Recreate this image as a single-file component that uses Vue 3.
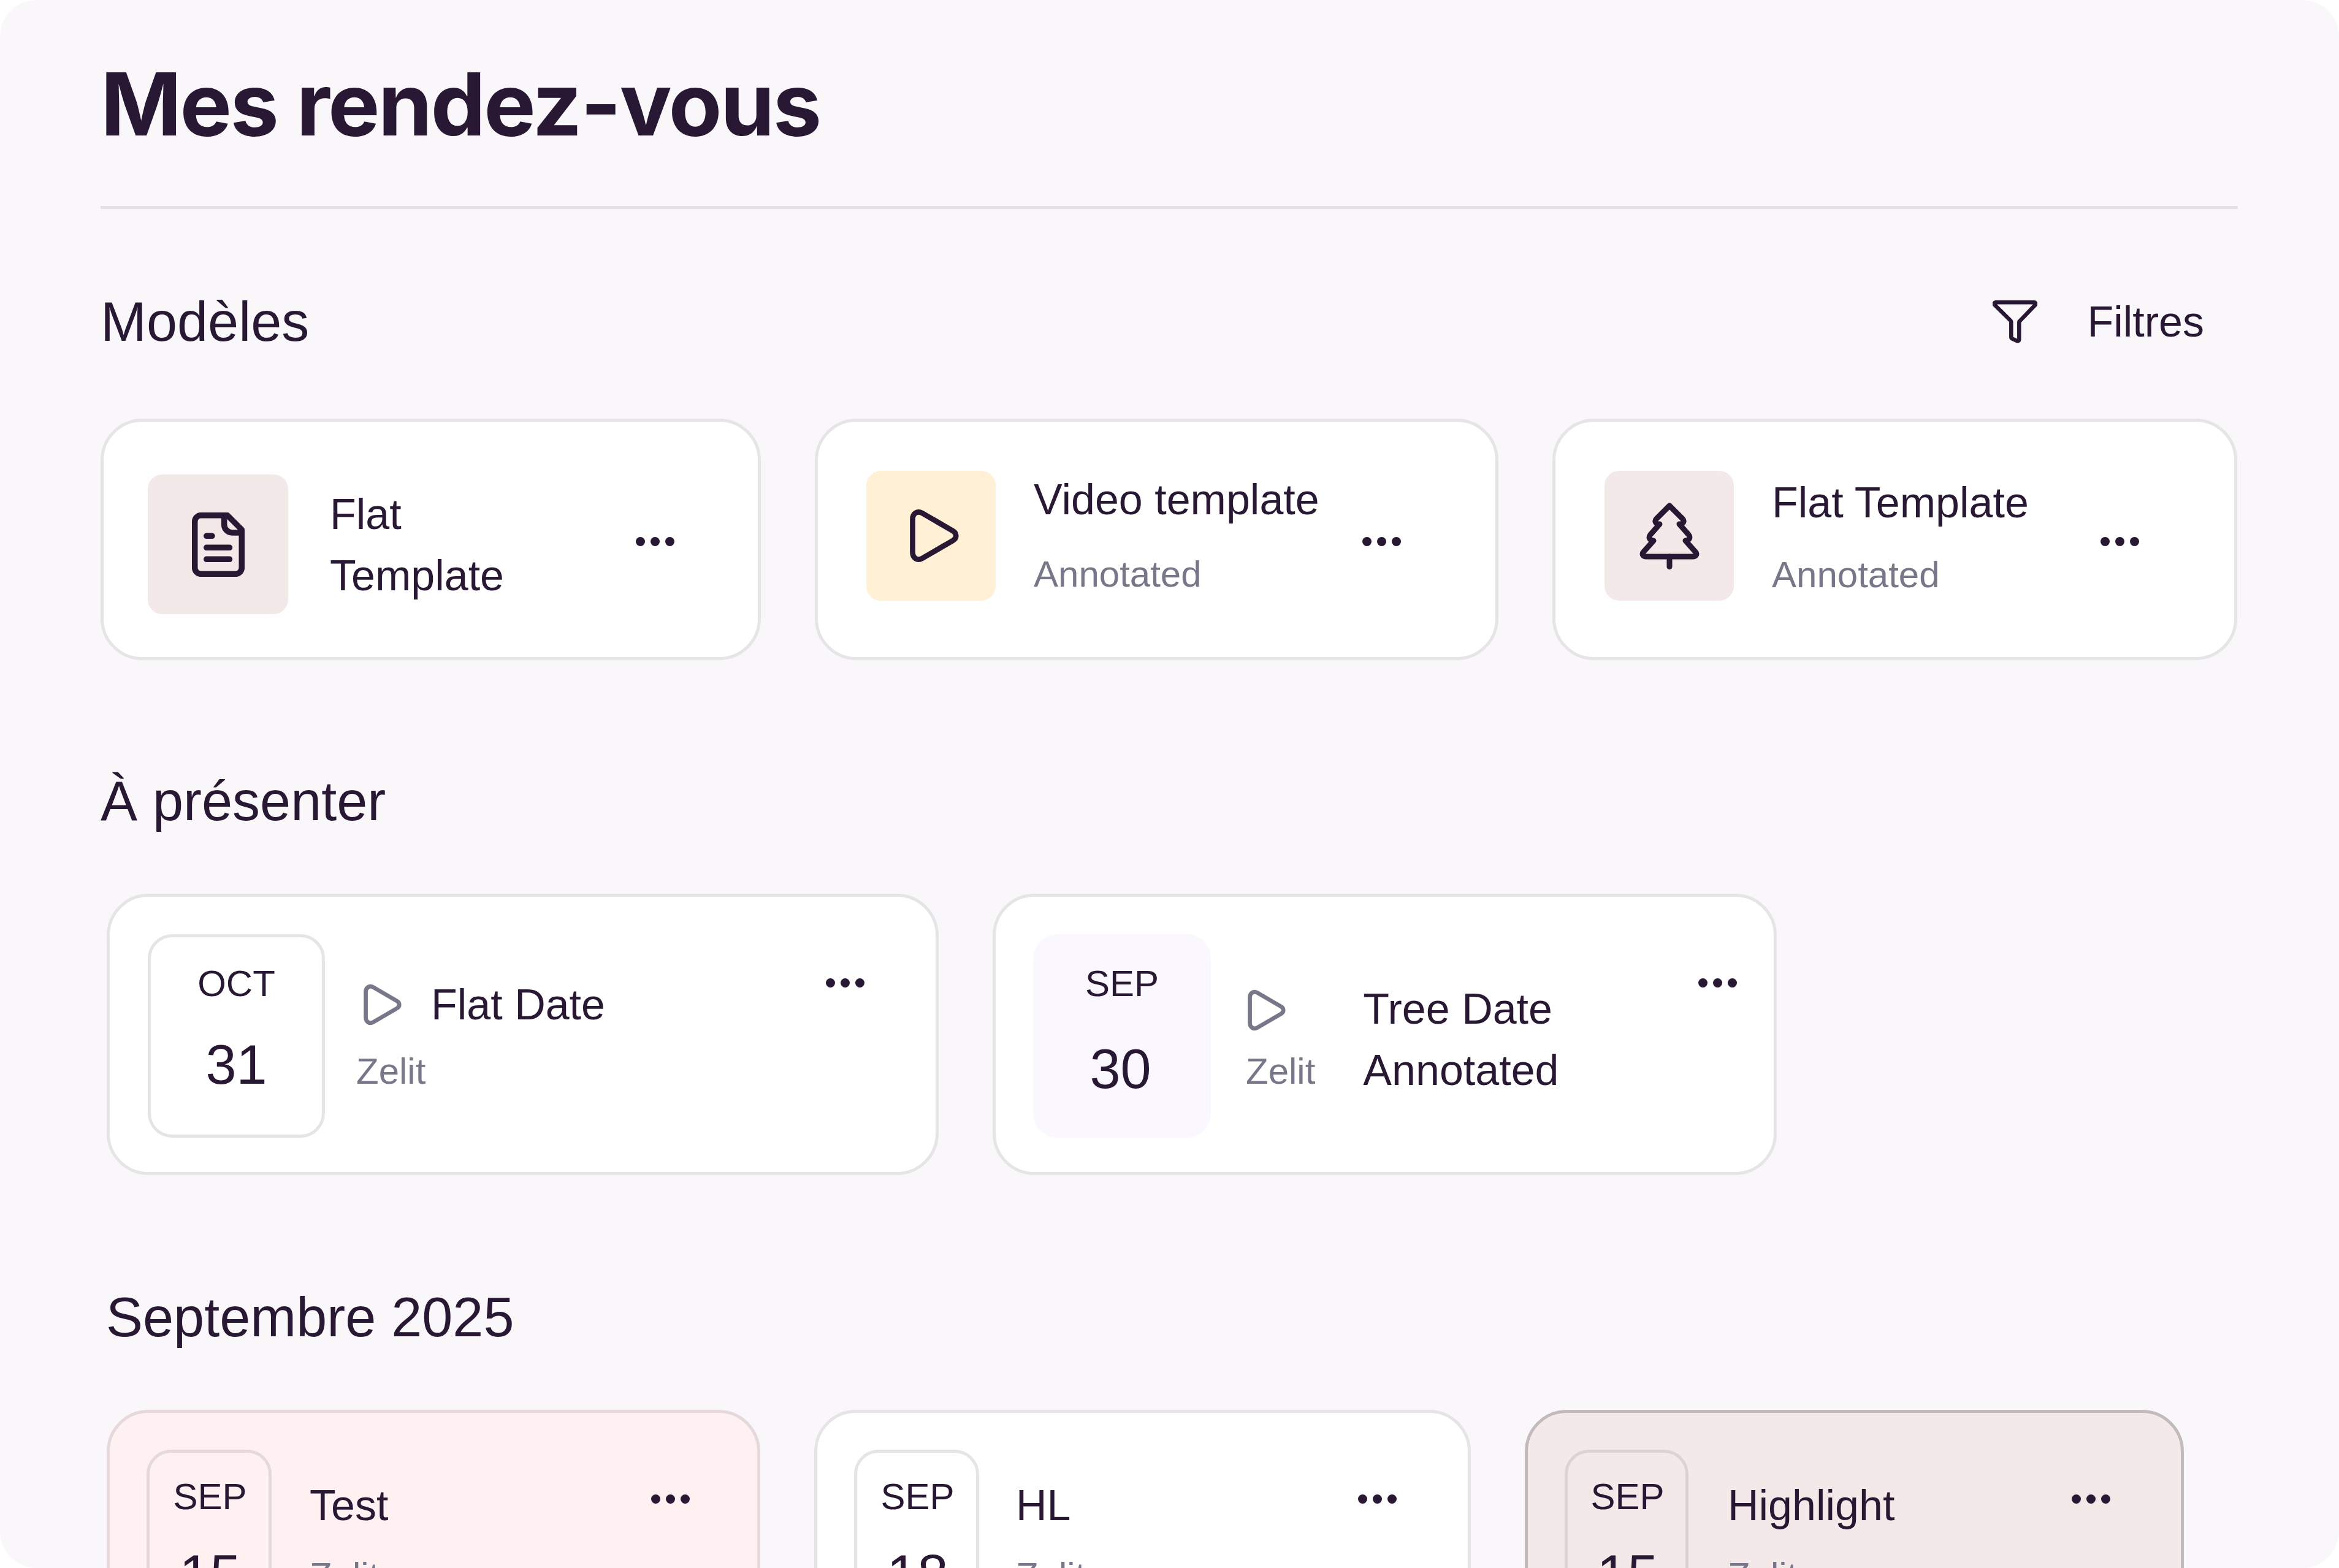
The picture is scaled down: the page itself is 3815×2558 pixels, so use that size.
<script setup>
const templates = [
  { id: 1, title: 'Flat Template', sub: '', icon: 'doc', tone: 'rose', cls: 'tpl-a' },
  { id: 2, title: 'Video template', sub: 'Annotated', icon: 'play', tone: 'cream', cls: 'tpl-b' },
  { id: 3, title: 'Flat Template', sub: 'Annotated', icon: 'tree', tone: 'rose', cls: 'tpl-c' }
]

const september = [
  { id: 1, day: '15', title: 'Test', cls: 'sep-a' },
  { id: 2, day: '18', title: 'HL', cls: 'sep-b' },
  { id: 3, day: '15', title: 'Highlight', cls: 'sep-c' }
]

const playPath = 'M4.500 17C4.500 8 12 2.500 20 7L70 36C77 40 77 48 70 52L20 81C12 85.500 4.500 80 4.500 71Z'
</script>

<template>
  <div class="page">
    <div class="panel">
      <h1 class="title">Mes rendez-vous</h1>

      <section class="models">
        <div class="section-head">
          <h2 class="section-title">Modèles</h2>
          <button class="filter">
            <svg class="filter-icon" viewBox="0 0 73 70" fill="none">
              <path d="M5.500 3.300H67.500a2.500 2.500 0 0 1 2 4.200L45 33a4 4 0 0 0-1.700 3V64a2.500 2.500 0 0 1-3.600 2.200L32 62.500a3 3 0 0 1-1.700-2.500V36a4 4 0 0 0-1-3L3.500 7.500a2.500 2.500 0 0 1 2-4.200Z" stroke="#291833" stroke-width="6.500" stroke-linejoin="round" />
            </svg>
            <span>Filtres</span>
          </button>
        </div>

        <div class="tpl-row">
          <div v-for="t in templates" :key="t.id" class="card tpl" :class="t.cls">
            <div class="tpl-icon" :class="t.tone">
              <svg v-if="t.icon === 'doc'" class="ico-doc" viewBox="0 0 86 105" fill="none" stroke="#291833" stroke-width="9.500" stroke-linecap="round" stroke-linejoin="round">
                <path d="M58 4.750H15a10 10 0 0 0-10.250 10V90a10 10 0 0 0 10.250 10.250H71A10 10 0 0 0 81.250 90V28Z" />
                <path d="M52.700 4.750V20a13 13 0 0 0 13 13H81" />
                <path d="M23.750 38.300H33M23.750 57.300H61.500M23.750 76.300H61.500" />
              </svg>
              <svg v-else-if="t.icon === 'play'" class="ico-play" viewBox="0 0 80 88" fill="none" stroke="#291833" stroke-width="8.700" stroke-linejoin="round">
                <path :d="playPath" />
              </svg>
              <svg v-else class="ico-tree" viewBox="0 0 98 111" fill="none" stroke="#291833" stroke-width="9" stroke-linecap="round" stroke-linejoin="round">
                <path d="M49 6L70 27C74 31 72 36 65 36L80 53C84 58 81 63 75 63L91 81C95 85 92 89 87 89H11C6 89 3 85 7 81L23 63C17 63 14 58 18 53L33 36C26 36 24 31 28 27Z" />
                <path d="M49 89V105.500" />
              </svg>
            </div>
            <div class="tpl-text">
              <div class="name">{{ t.title }}</div>
              <div v-if="t.sub" class="muted tpl-sub">{{ t.sub }}</div>
            </div>
            <div class="dots"><i></i><i></i><i></i></div>
          </div>
        </div>
      </section>

      <section class="present">
        <h2 class="section-title">À présenter</h2>
        <div class="present-row">
          <div class="card date-card oct">
            <div class="date-box">
              <div class="month">OCT</div>
              <div class="day">31</div>
            </div>
            <div class="oct-body">
              <div class="oct-top">
                <svg class="ico-mini" viewBox="0 0 80 88" fill="none" stroke="#77778a" stroke-width="8.700" stroke-linejoin="round">
                  <path :d="playPath" />
                </svg>
                <span class="name">Flat Date</span>
              </div>
              <div class="muted oct-sub">Zelit</div>
            </div>
            <div class="dots dots-top"><i></i><i></i><i></i></div>
          </div>

          <div class="card date-card tree">
            <div class="date-box filled">
              <div class="month">SEP</div>
              <div class="day day-low">30</div>
            </div>
            <div class="tree-meta">
              <svg class="ico-mini" viewBox="0 0 80 88" fill="none" stroke="#77778a" stroke-width="8.700" stroke-linejoin="round">
                <path :d="playPath" />
              </svg>
              <div class="muted">Zelit</div>
            </div>
            <div class="tree-text">
              <div class="name">Tree Date</div>
              <div class="name">Annotated</div>
            </div>
            <div class="dots dots-top"><i></i><i></i><i></i></div>
          </div>
        </div>
      </section>

      <section class="month-block">
        <h2 class="section-title">Septembre 2025</h2>
        <div class="sep-row">
          <div v-for="c in september" :key="c.id" class="card sep" :class="c.cls">
            <div class="date-box">
              <div class="month">SEP</div>
              <div class="day">{{ c.day }}</div>
            </div>
            <div class="sep-body">
              <div class="name">{{ c.title }}</div>
              <div class="muted">Zelit</div>
            </div>
            <div class="dots dots-top"><i></i><i></i><i></i></div>
          </div>
        </div>
      </section>
    </div>
  </div>
</template>

<style scoped>
.page {
  width: 3815px;
  height: 2558px;
  overflow: hidden;
  background: #ffffff;
  color: #291833;
  font-family: "Liberation Sans", Arial, sans-serif;
}

.panel {
  height: 100%;
  box-sizing: border-box;
  padding: 0 165px 0 164px;
  background: #f9f7fa;
  border-radius: 60px;
  overflow: hidden;
}

.title {
  margin: 0;
  padding-top: 89px;
  box-sizing: border-box;
  height: 341px;
  border-bottom: 5px solid #e3e1e5;
  font-family: Inter, "Liberation Sans", sans-serif;
  font-size: 142px;
  line-height: 160px;
  font-weight: 700;
  letter-spacing: -2.700px;
}

.models {
  padding-top: 130px;
}

.section-head {
  display: flex;
  align-items: center;
  justify-content: space-between;
  padding-right: 55px;
}

.section-title {
  margin: 0;
  font-size: 90px;
  line-height: 108px;
  font-weight: 400;
}

.filter {
  display: flex;
  align-items: center;
  gap: 81px;
  padding: 0;
  border: 0;
  background: none;
  color: inherit;
  font: inherit;
  font-size: 70px;
}

.filter-icon {
  display: block;
  width: 73px;
  height: 70px;
}

.card {
  display: flex;
  box-sizing: border-box;
  position: relative;
  background: #ffffff;
  border: 5px solid #e5e5e6;
  border-radius: 68px;
}

.name {
  font-size: 70px;
  line-height: 100px;
}

.muted {
  font-size: 60px;
  line-height: 72px;
  color: #77778a;
}

.dots {
  display: flex;
  gap: 9px;
  align-items: center;
}

.dots i {
  width: 15px;
  height: 15px;
  border-radius: 50%;
  background: #291833;
}

.tpl-row {
  display: flex;
  gap: 88px;
  margin-top: 104px;
}

.tpl {
  height: 394px;
  align-items: center;
}

.tpl-a {
  width: 1077px;
  padding-left: 72px;
}

.tpl-b {
  width: 1115px;
  padding-left: 79px;
}

.tpl-c {
  width: 1117px;
  padding-left: 80px;
}

.tpl-icon {
  flex: none;
  display: flex;
  align-items: center;
  justify-content: center;
  width: 211px;
  height: 212px;
  margin-top: -12px;
  border-radius: 24px;
}

.tpl-a .tpl-icon {
  width: 229px;
  height: 228px;
  margin-top: 16px;
}

.rose {
  background: #f3e9e9;
}

.cream {
  background: #fff0d6;
}

.ico-doc {
  width: 86px;
  height: 105px;
}

.ico-play {
  width: 80px;
  height: 88px;
  margin-left: 10px;
}

.ico-tree {
  width: 98px;
  height: 111px;
}

.tpl-text {
  flex: 1;
  min-width: 0;
  margin-left: 62px;
}

.tpl-b .tpl-text {
  margin-top: -22px;
}

.tpl-c .tpl-text {
  margin-top: -16px;
}

.tpl-a .tpl-text {
  margin-left: 68px;
  margin-top: 18px;
}

.tpl-a .name {
  max-width: 330px;
}

.tpl-b .tpl-sub {
  margin-top: 36px;
}

.tpl-c .tpl-sub {
  margin-top: 32px;
}

.tpl .dots {
  flex: none;
  margin-top: 6px;
}

.tpl-a .dots {
  margin-right: 136px;
}

.tpl-b .dots {
  margin-right: 154px;
}

.tpl-c .dots {
  margin-right: 155px;
}

.present {
  padding-top: 176px;
}

.present-row {
  display: flex;
  gap: 88px;
  margin: 97px 0 0 10px;
}

.date-card {
  height: 459px;
  padding: 61px 0 0 61px;
}

.oct {
  width: 1357px;
  padding-left: 62px;
}

.tree {
  width: 1279px;
}

.date-box {
  flex: none;
  box-sizing: border-box;
  width: 289px;
  height: 332px;
  padding-top: 40px;
  text-align: center;
  border: 5px solid #e5e5e6;
  border-radius: 40px;
}

.date-box.filled {
  width: 290px;
  border: 0;
  background: #faf8fe;
  padding-top: 45px;
}

.month {
  font-size: 60px;
  line-height: 72px;
}

.day {
  margin-top: 42px;
  font-size: 90px;
  line-height: 108px;
}

.date-box .day-low {
  margin-top: 49px;
  padding-right: 5px;
}

.oct-body {
  margin-left: 51px;
  padding-top: 65px;
}

.oct-top {
  display: flex;
  align-items: center;
  gap: 48px;
  margin-left: 12px;
}

.oct-sub {
  margin-top: 23px;
}

.ico-mini {
  display: block;
  width: 62px;
  height: 68px;
  flex: none;
}

.tree-meta {
  margin-left: 57px;
  padding-top: 90px;
}

.tree-meta .ico-mini {
  margin-left: 3px;
}

.tree-meta .muted {
  margin-top: 30px;
}

.tree-text {
  margin-left: 78px;
  padding-top: 72px;
}

.dots-top {
  position: absolute;
  top: 133px;
  right: 116px;
}

.tree .dots-top {
  right: 60px;
}

.month-block {
  padding: 178px 0 0 9px;
}

.sep-row {
  display: flex;
  margin: 97px 0 0 1px;
}

.sep {
  height: 500px;
  padding: 60px 0 0 60px;
  background: #ffffff;
}

.sep .date-box {
  width: 204px;
  height: 400px;
  padding-top: 36px;
  padding-left: 3px;
}

.sep .day {
  margin-top: 37px;
}

.sep-a {
  width: 1066px;
  margin-right: 88px;
  background: #fff0f2;
  border-color: #e5d9dc;
}

.sep-a .date-box {
  border-color: #e5d9dc;
}

.sep-b {
  width: 1071px;
  margin-right: 88px;
}

.sep-b .sep-body {
  margin-left: 60px;
}

.sep-c {
  width: 1075px;
  background: #f3e9e9;
  border-color: #c3babc;
}

.sep-c .date-box {
  width: 202px;
  border-color: #dcd3d3;
}

.sep-body {
  margin-left: 62px;
  padding-top: 41px;
}

.sep-c .sep-body {
  margin-left: 64px;
}

.sep-body .muted {
  margin-top: 29px;
}

.sep .dots-top {
  top: 133px;
  right: 110px;
}

.sep-b .dots-top {
  right: 116px;
}

.sep-c .dots-top {
  right: 115px;
}
</style>

<style>
html,
body {
  margin: 0;
  background: #ffffff;
}
</style>
